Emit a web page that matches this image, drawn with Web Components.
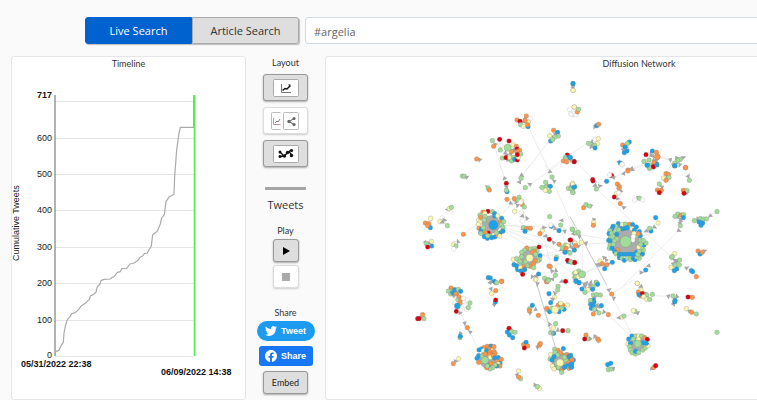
<!DOCTYPE html>
<html lang="en">
<head>
<meta charset="utf-8">
<title>Diffusion Network</title>
<style>
body{margin:0;min-height:100vh;background:#fafafa;overflow:hidden;font-family:"Open Sans","Noto Sans",sans-serif;color:#333}
</style>
</head>
<body>
<diffusion-app></diffusion-app>
<script>
const define=(name,html,setup)=>{
  const t=document.createElement('template');t.innerHTML=html;
  customElements.define(name,class extends HTMLElement{
    constructor(){super();this.attachShadow({mode:'open'}).append(t.content.cloneNode(true));}
    connectedCallback(){if(setup)setup(this.shadowRoot,this);}
  });
};

define('search-bar',`<style>
:host{display:flex;gap:6px;height:27px}
*{box-sizing:border-box}
.seg{display:flex;flex:none;width:214px;border-radius:3px;box-shadow:1px 1px 1px #bbb}
button{flex:1;padding:0;border:1px solid #aaa;font:11px "Open Sans",sans-serif;background:#dedede;color:#333;border-radius:0 3px 3px 0}
button.on{background:#0062cf;color:#fff;border-color:#0062cf;border-radius:3px 0 0 3px}
input{flex:1;min-width:0;border:1px solid #d3dae2;border-radius:3px;background:#fff;padding:2px 8px 0;font:11px "Open Sans",sans-serif;color:#666}
</style>
<div class="seg" role="group" aria-label="Search type"><button class="on" aria-pressed="true">Live Search</button><button aria-pressed="false">Article Search</button></div>
<input type="text" value="#argelia" aria-label="Search query">`);

define('view-panel',`<style>
:host{display:block;box-sizing:border-box;background:#fff;border:1px solid #e6e6e6;border-radius:3px;min-height:100%}
h2{margin:0;font:400 9px/14px Lato,"Open Sans",sans-serif;text-align:center;color:#333}
</style><h2><slot name="title"></slot></h2><slot></slot>`);

define('tool-button',`<style>
:host{display:block}
button{box-sizing:border-box;display:flex;align-items:center;justify-content:center;width:45px;height:27px;padding:0;border:1px solid #999;border-radius:3px;background:#dedede;color:#222;font:9px Lato,"Open Sans",sans-serif;box-shadow:0 1px 2px #aaa}
:host([small]) button{width:26px;height:23px}
:host([embed]) button{height:23px}
:host([off]) button{background:#fff;border-color:#ddd;box-shadow:0 1px 2px #ccc}
</style><button><slot></slot></button>`,(r,h)=>{const b=r.querySelector('button');if(h.title)b.setAttribute('aria-label',h.title);b.disabled=h.hasAttribute('off');});

define('share-link',`<style>
:host{display:block}
a{box-sizing:border-box;display:flex;align-items:center;justify-content:center;gap:4px;height:20px;width:54px;border-radius:3px;background:#1877f2;color:#fff;font:bold 9px "Liberation Sans",sans-serif;text-decoration:none}
:host([pill]) a{width:58px;border-radius:10px;background:#1d9bf0}
</style><a href="#"><slot></slot></a>`);

define('side-tools',`<style>
:host{display:flex;flex-direction:column;align-items:center}
h3{margin:0;font:400 9px/14px Lato,"Open Sans",sans-serif;color:#333}
h3.big{font:400 11px/16px "Open Sans",sans-serif}
section{display:flex;flex-direction:column;align-items:center;gap:6px}
.layout{padding-top:17px}.layout h3{margin:-17px 0 -2px}
hr{width:41px;height:3px;margin:20px 0 7px;border:0;background:#a5a5a5}
.play{gap:3px;padding-top:11px}
.share{gap:5px;padding-top:18px}
.play h3{margin-bottom:-2px}
.share h3{margin-bottom:-4px}
</style>
<section class="layout"><h3>Layout</h3>
<tool-button title="Timeline only"><svg width="26" height="18"><rect x=".5" y=".5" width="25" height="17" rx="1" fill="#fff" stroke="#aaa"/><path d="M8.500 5v8.500h9.500" fill="none" stroke="#777"/><path d="M9.500 11.500l2.500-2 2 .500 3-3" fill="none" stroke="#111" stroke-width="1.500"/><path d="M15 5.500h2.500v2.500z" fill="#111"/></svg></tool-button>
<tool-button off title="Split view"><svg width="29" height="18"><path d="M9.500.500h-8a1 1 0 0 0-1 1v15a1 1 0 0 0 1 1h8" fill="#fff" stroke="#bbb"/><path d="M2.500 6v6.500h7" fill="none" stroke="#b99"/><path d="M4 11l2-2 1 1 2-3" fill="none" stroke="#777"/><rect x="12.500" y=".5" width="15" height="17" rx="1" fill="#fff" stroke="#bbb"/><path d="M23 6.500l-5 3 5 3" fill="none" stroke="#666"/><g fill="#666"><circle cx="23" cy="6.500" r="1.600"/><circle cx="18" cy="9.500" r="1.700"/><circle cx="23" cy="12.500" r="1.600"/></g></svg></tool-button>
<tool-button title="Network only"><svg width="26" height="18"><rect x=".5" y=".5" width="25" height="17" rx="1" fill="#fff" stroke="#aaa"/><path d="M7 7l4 4 5-4.500 3 4M7 11.500l4-.500M11 11l7-6" fill="none" stroke="#111" stroke-width="1.300"/><g fill="#111"><circle cx="7" cy="7" r="1.500"/><circle cx="7" cy="11.500" r="1.500"/><circle cx="11.500" cy="11" r="1.700"/><circle cx="14.500" cy="7.500" r="1.700"/><circle cx="18.500" cy="5.500" r="1.600"/><circle cx="18.500" cy="10.500" r="1.700"/></g></svg></tool-button></section>
<hr>
<h3 class="big">Tweets</h3>
<section class="play"><h3>Play</h3>
<tool-button small title="Play"><svg width="10" height="10"><path d="M2 1l7 4-7 4z" fill="#000"/></svg></tool-button>
<tool-button small off title="Stop"><svg width="8" height="8"><path d="M0 0h8v8H0z" fill="#aaa"/></svg></tool-button></section>
<section class="share"><h3>Share</h3>
<share-link pill><svg width="12" height="12" viewBox="0 0 24 24"><path fill="#fff" d="M23.950 4.570a10 10 0 0 1-2.820.77 4.960 4.960 0 0 0 2.160-2.720c-.95.550-2 .95-3.130 1.180a4.920 4.920 0 0 0-8.380 4.480C7.690 8.090 4.070 6.130 1.640 3.160a4.820 4.820 0 0 0-.67 2.480c0 1.710.87 3.210 2.190 4.100a4.900 4.900 0 0 1-2.230-.62v.06a4.920 4.920 0 0 0 3.950 4.830 5 5 0 0 1-2.210.09 4.940 4.940 0 0 0 4.600 3.420A9.870 9.870 0 0 1 0 19.540a13.990 13.990 0 0 0 7.550 2.210c9.050 0 14-7.500 14-13.980 0-.21 0-.42-.02-.63a9.940 9.940 0 0 0 2.460-2.550z"/></svg>Tweet</share-link>
<share-link><svg width="12" height="12" viewBox="0 0 24 24"><path fill="#fff" d="M24 12.070C24 5.440 18.630.070 12 .070S0 5.440 0 12.070c0 5.990 4.390 10.950 10.130 11.850v-8.380H7.080v-3.470h3.050V9.430c0-3 1.790-4.670 4.530-4.670 1.310 0 2.690.240 2.690.240v2.950h-1.510c-1.490 0-1.960.93-1.960 1.870v2.250h3.330l-.530 3.470h-2.800v8.380C19.610 23.020 24 18.060 24 12.070z"/></svg>Share</share-link>
<tool-button embed>Embed</tool-button></section>`);

define('timeline-chart',`<style>
:host{display:block}svg{display:block;width:100%;max-width:233px}
text{font:9px "Liberation Sans",sans-serif;fill:#222}.b{font-weight:bold;fill:#111}
</style><svg viewBox="12 71 233 329" role="img" aria-label="Cumulative tweets over time"><g id="g"></g>
<path d="M55 95V356" stroke="#666" fill="none"/>
<path transform="translate(0 220) scale(.3333)" fill="none" stroke="#aaa" stroke-width="3.600" stroke-linejoin="round" d="M163 404L168 394 177 391 183 377 190 367 192 340 196 318 202 299 210 290 215 281 226 278 236 268 244 258 256 250 268 238 271 228 280 224 288 216 292 200 300 192 303 182 312 178 330 177 344 168 352 157 361 155 365 146 380 145 390 132 402 129 415 120 420 112 428 108 433 101 442 99 448 88 454 78 458 44 472 34 481 12 485-6 493-16 498-55 508-70 522-77 524-130 530-210 537-260 541-278H581V-374"/>
<path d="M194.500 95V356" stroke="#4df04d" stroke-width="1.500"/>
<text class="b" x="52" y="98" text-anchor="end">717</text>
<text class="b" x="21" y="367">05/31/2022 22:38</text><text class="b" x="161" y="375">06/09/2022 14:38</text>
<text transform="translate(19 261) rotate(-90)">Cumulative Tweets</text></svg>`,r=>{
  let s='';
  for(let v=0;v<=700;v+=100){const y=Math.round(356-v*.364);
    s+=`<path d="M55 ${y+.5}H194" stroke="#e6e6e6"/>`;
    if(v<700)s+=`<text x="52" y="${v?y+3:y+2}" text-anchor="end">${v}</text>`;}
  r.getElementById('g').innerHTML=s;
});

/* Node lists by tile; three drawing units per CSS pixel. Upper-case letters are hub nodes, "a" is an arrowhead. */
const TILES=[
[405,50,`b504 101,y504 121,w494 179,w498 190,w506 194,y508 171,a357 214,a362 206,o364 198,o336 210,r345 214,w376 205,y370 216,g347 224,y355 229,b369 230,o360 212,o368 224,a452 252,a446 262,o446 241,b458 247,g460 258,y434 257,g450 261,b437 273,g443 269,a271 282,g262 272,r284 268,o266 289,r312 273,w288 287,a300 308,a318 312,a328 302,a310 330,a305 315,a322 300,g286 300,y325 285,o334 289,r336 297,o344 301,o320 305,o336 305,g347 312,g292 324,r303 323,y314 323,g325 322,g320 333,b329 328,r337 330,y340 322,r337 314,G308 293,a225 330,o215 327,a497 330,r487 315,g481 322,b491 322,g482 327,o475 333,o485 336,r507 335`],
[570,50,`a9 111,b9 101,y9 121,w10 190,w18 194,w3 194,o22 186,y13 171,g26 178,a75 231,b80 227,o86 223,a65 275,a68 284,a62 290,g55 280,w76 268,y85 266,y82 281,g74 286,b75 294,a170 290,a160 298,o158 285,b178 276,g172 281,b165 291,b171 303,b163 308,a147 336,b151 339,w157 345,a8 330,b1 322,r13 335,a250 318,a252 330,a242 314,a260 330,r228 314,b247 303,o259 307,g237 330,g222 334,b260 342,o252 338,g240 345,b231 345,r250 351,O262 320,a186 356,o174 360,a302 330,a330 345,a310 345,a340 322,a325 335,a320 325,g331 328,g323 332,g314 340,b314 348,o347 353`],
[405,165,`g172 33,g178 34,a185 36,a246 66,g250 70,o253 75,a299 41,r304 55,a304 66,b306 80,g304 76,a351 30,g348 40,a343 52,g361 68,a374 58,a435 21,g441 36,a447 48,a428 62,g422 52,g422 66,b436 64,g411 67,g433 79,y421 76,y503 56,b509 65,g490 70,g498 72,g504 82,o306 103,a318 114,a333 112,a338 122,o328 101,g342 97,g340 106,y350 108,o352 119,g358 126,w347 112,y329 139,w349 143,w352 168,a352 154,a365 160,a128 134,y133 131,g139 127,y77 160,o61 174,o71 176,b76 188,o68 182,w112 159,y105 170,w115 170,g127 182,a118 165,a112 172,o175 208,a158 230,w150 236,y146 239,g153 243,w146 252,a72 234,a62 232,g64 236,b80 243,r68 246,y79 229,H258 179,o234 141,r249 139,g262 140,y240 145,b269 146,b269 153,b290 160,y278 152,g225 150,y221 165,y224 172,o227 157,g240 155,g238 165,o287 171,g296 170,g289 180,g294 187,y220 178,o222 190,b229 193,g235 188,b227 203,g228 205,g240 200,r250 204,o241 203,b238 215,b247 220,g256 213,b260 218,b269 216,g290 200,b294 198,b284 205,o278 210,y284 213,g274 203,g248 212,B265 180,g434 155,b439 184,w437 180,g467 180,a470 167,a449 190,b462 197,g502 193,a480 199,y412 196,o405 206,a417 187,a422 214,r433 223,a445 233,a352 190,g355 188,o365 190,o376 190,b360 199,r495 225,a470 255,a490 258,a500 248,a480 262,a495 240,o462 238,g472 248,g482 240,y488 242,o483 250,g455 277,b453 282,b480 262,g495 264,b490 290,r488 286,g497 290,r508 292,y508 255,b509 235,H370 281,o365 249,g358 256,g350 262,g377 252,g388 250,r402 246,g396 258,o388 258,o383 262,b405 272,g403 284,g398 288,o390 288,o386 296,o375 304,g386 308,g366 302,g358 298,o355 305,y340 285,y325 283,g335 281,g345 290,g340 300,g338 310,b327 299,b335 303,b338 314,y346 308,b348 318,o358 312,b359 314,r353 328,g392 268,g362 290,g350 275,Y374 279,o432 303,o436 305,a440 318,a452 317,a382 336,a394 331,a392 338,b401 327,y392 343,g419 340,g451 331,o425 350,g430 344,a442 343,a470 350,r482 349,g509 325,g509 338,b250 338,b256 339,a263 349,g272 353,o290 349`],
[570,165,`a3 62,y8 57,b12 67,g8 82,r68 44,r69 48,a75 62,g79 72,a90 62,w121 28,r125 32,w119 30,a130 38,b110 49,a161 25,o174 18,a187 13,w156 -2,o142 57,o148 65,o147 70,a152 78,y139 86,w146 84,r133 96,a143 100,o151 116,a162 127,g238 10,g240 8,r250 5,b232 1,b261 0,a293 37,o288 26,o295 28,g297 37,y280 39,o288 46,g268 57,a275 66,o262 75,o274 76,o268 78,r268 83,a350 82,o340 76,g351 77,r342 85,a354 33,g358 46,o346 8,b315 2,a62 122,o41 128,g48 119,g58 123,w194 105,a205 97,g208 100,w218 105,a72 165,y71 172,o70 181,J168 230,b145 176,y157 178,g166 177,o178 178,b188 179,g137 184,b129 184,b150 190,b157 192,b165 190,b172 188,b126 192,y186 191,b199 186,b193 196,g120 197,b117 206,g125 205,g136 200,g146 194,b140 208,g121 218,g128 215,b116 226,g140 222,b122 230,g133 228,g120 240,g130 238,g118 250,b126 250,o143 254,b134 260,g138 266,b148 278,b148 268,b156 268,g156 280,b166 268,b163 286,b176 268,g172 280,b184 268,g182 284,b190 280,b195 284,g208 280,g200 276,b192 268,b200 262,g217 268,b217 266,g203 268,g208 258,g220 255,g214 248,b222 240,y206 246,g212 238,g228 234,g212 226,g220 227,b211 212,g200 210,b208 200,o205 206,y192 205,w188 225,w190 215,Z167 230,b257 158,y264 174,a254 186,b243 198,g239 190,a229 199,a421 153,g441 140,a382 162,g391 161,b387 171,g373 167,g400 162,b398 174,b393 181,g409 162,a325 157,a333 165,a330 172,g323 147,o333 150,g341 149,b340 158,g315 154,g331 182,a327 196,o384 258,b390 267,o397 262,a404 257,a315 285,a318 292,a322 290,a310 295,y314 266,g305 277,g307 275,g329 285,y303 307,g316 300,g328 300,b320 312,b313 317,a350 308,b364 317,b368 320,o379 335,a236 303,b227 315,a214 322,y202 355,a10 205,g7 193,g17 204,g25 202,a29 215,a25 243,r2 225,y15 234,o17 242,b13 255,y34 232,a49 235,g5 292,r14 293,a103 277,a108 285,a82 298,a90 300,a115 298,y90 288,o97 296,o110 300,b104 311,b127 292,g26 318,y17 323,o28 330,g17 335,y25 335,G36 328,b18 348,b27 352,a62 352,g79 352,a42 358`],
[405,280,`a255 7,b268 4,g275 8,o290 4,a259 27,o272 32,y260 40,a268 73,b271 66,r272 60,a153 35,a145 48,a158 45,o138 24,g130 33,b149 29,g160 28,b167 34,g137 42,b143 38,o153 42,o162 51,g158 60,o167 59,w175 55,w188 60,w180 75,w148 68,w165 90,w185 88,o165 70,g195 69,g190 83,r154 94,C157 78,a165 98,a48 112,r38 116,r42 116,o53 104,g57 116,a180 130,o187 143,a195 156,a166 161,g165 173,b166 169,o145 251,a152 243,y161 236,H250 238,o237 203,o247 199,b258 198,o267 200,b222 210,b229 207,o252 207,y235 212,b245 212,o255 216,o267 215,o270 220,o254 224,b221 227,b216 235,o221 247,g232 228,o240 222,y256 232,o265 227,b269 234,b280 233,o289 238,b285 250,o276 245,y280 252,o285 258,b275 258,g270 255,g263 263,g255 267,o245 263,b250 255,o258 250,g247 258,G240 241,a318 150,b307 156,r312 145,g320 155,g330 157,b313 165,b323 173,g362 195,o356 194,b363 187,o368 198,r358 204,a398 202,o403 196,o406 191,y341 273,a337 285,g347 296,o341 291,a391 314,y403 325,g397 320,a374 99,g374 86,b382 76,o373 92,a391 88,o400 106,y392 -1,a398 12,o425 5,g430 2,g459 19,g458 30,b432 41,a449 40,y449 52,a442 58,a455 80,a462 72,b437 68,o460 75,o473 76,y467 70,y488 75,b477 88,g470 84,g428 90,o425 85,b434 95,b462 95,g440 85,Y450 89,a433 133,g452 131,y445 144,a458 150,b446 160,g437 158,a442 160,r473 152,g489 152,H467 245,y437 224,g449 208,o459 211,g450 217,o467 219,b475 206,g458 225,g435 237,b441 240,b447 230,y442 258,y447 267,g455 250,g483 225,o486 224,b492 229,g500 236,b505 240,o500 247,b497 254,o490 243,b486 258,o492 265,b500 262,o470 270,g470 277,g460 262,b478 262,g482 240,g478 232,Y465 248`],
[570,280,`a45 18,a60 15,a50 10,b18 4,b27 9,b36 27,g79 8,b83 13,a58 22,g70 20,y54 29,b68 28,g45 37,g70 45,g80 44,g91 45,a74 52,a80 75,a85 80,a80 90,b70 60,b72 66,g61 62,b62 73,b70 78,b64 85,b94 77,g73 88,g87 99,o70 102,a102 97,o115 104,a117 29,o125 42,a132 55,a147 114,y157 111,g162 108,g195 94,y190 92,a203 98,y202 10,a213 20,a225 40,a228 50,o212 48,y213 30,o205 36,b207 44,r217 41,g230 45,y221 50,y230 58,g239 58,g247 43,a296 49,g309 48,a320 49,a311 72,b314 66,b315 61,a362 51,r354 51,o367 52,a358 92,y349 86,o365 97,g379 102,g441 157,a60 176,o48 165,g52 177,r44 177,a75 170,o83 177,o86 181,b2 226,b1 235,o6 240,b5 252,b2 260,I203 192,y174 192,b186 168,g197 168,y206 168,g215 168,o224 173,b176 177,r232 178,g190 177,b181 190,g179 200,g181 210,g186 218,g196 222,b197 214,g206 218,g218 210,g226 204,y234 197,b229 190,b220 188,y205 178,G203 191,b113 254,b122 250,g115 269,g124 267,a131 266,a246 266,o252 262,r257 257`]];
/* Links: tile index, x1, y1, x2, y2, optional 1 for a heavier line */
const LINKS=`0 372 235 432 360;0 434 270 365 360;0 270 290 290 360;0 430 360 485 320;1 0 314 50 280;1 186 356 225 337;1 268 318 310 333;1 268 322 302 332;2 285 0 304 55;2 374 0 348 40;2 422 0 510 200;2 460 0 361 68;2 361 68 265 178;2 175 208 215 178;2 262 178 352 186;2 262 178 480 190;2 265 180 510 278;2 265 180 430 223;2 265 180 508 325;2 374 279 500 262;2 374 279 490 250;2 306 103 333 115;2 467 180 480 240;2 412 196 437 300;3 28 0 68 42;3 79 72 320 290;3 130 38 220 0;3 167 230 20 208;3 167 230 17 240;3 40 325 130 290;3 0 155 110 360 1;3 327 196 160 362;3 37 235 37 320;3 320 290 364 317;3 167 230 254 186;3 167 230 243 205;3 391 165 441 140;4 165 95 218 205;4 392 0 452 205 1;4 400 106 433 133;4 433 133 465 100;5 0 0 180 165;5 100 0 187 165;5 125 42 190 0;5 245 47 350 51;5 203 98 147 114;3 354 33 340 5;3 40 325 95 295`;
define('network-graph',`<style>:host{display:block}svg{display:block;width:626px;height:329px}
.l{stroke:#e4e4e4;stroke-width:2}.h{stroke:#c9c9c9;stroke-width:3}.n{stroke:#777;stroke-opacity:.55;stroke-width:1.500}</style>
<svg viewBox="978 213 1878 987" role="img" aria-label="Diffusion network of tweets"></svg>`,r=>{
  const col={b:'#1ba3ea',g:'#a1dc98',o:'#ff9447',r:'#d9000c',y:'#fbf7b0',w:'#fff'};
  const hub={B:['b',14],C:['b',9],G:['g',11],O:['o',9],Y:['y',11],Z:['g',17]};
  const disc={H:28,I:22,J:42};
  let s='';
  for(const l of LINKS.split(';')){const [t,a,b,c,d,h]=l.split(' ').map(Number),x=TILES[t][0]*3,y=TILES[t][1]*3;
    s+=`<path class="${h?'h':'l'}" d="M${x+a} ${y+b}L${x+c} ${y+d}"/>`;}
  for(const [ox,oy,list] of TILES)for(const e of list.split(',')){
    const k=e[0],[px,py]=e.slice(1).split(' ').map(Number),x=ox*3+px,y=oy*3+py;
    if(k==='a')s+=`<path fill="#a8a8a8" transform="translate(${x} ${y}) rotate(${(px*37+py*53)%360})" d="M-7-6L8-3 1 8z"/>`;
    else if(disc[k])s+=`<circle cx="${x}" cy="${y}" r="${disc[k]}" fill="#acacac"/>`;
    else{const [c,rad]=hub[k]||[k,7];s+=`<circle class="n" cx="${x}" cy="${y}" r="${rad}" fill="${col[c]}"${c==='w'?' style="stroke:#aaa"':''}/>`;}
  }
  r.querySelector('svg').innerHTML=s;
});

define('diffusion-app',`<style>
:host{display:grid;grid-template-rows:auto 1fr;gap:12px;box-sizing:border-box;height:100vh;padding:17px 0 0 11px;overflow:hidden}
search-bar{margin-left:74px}
main{display:grid;grid-template-columns:235px 79px minmax(628px,1fr);min-height:0}
</style>
<search-bar></search-bar>
<main>
<view-panel><span slot="title">Timeline</span><timeline-chart></timeline-chart></view-panel>
<side-tools></side-tools>
<view-panel><span slot="title">Diffusion Network</span><network-graph></network-graph></view-panel>
</main>`);
</script>
</body>
</html>
